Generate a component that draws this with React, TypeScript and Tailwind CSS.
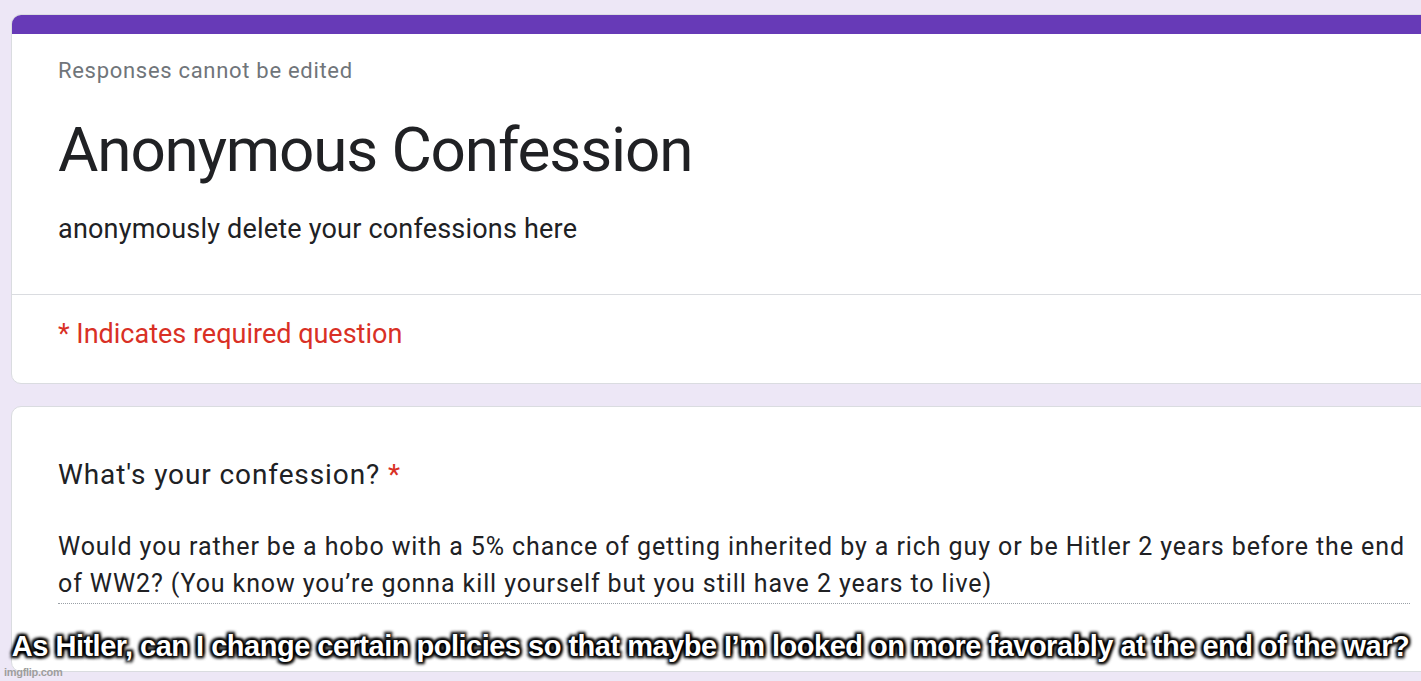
export default function App() {
    return (
        <div
            className="relative h-[681px] w-[1421px] overflow-hidden bg-[#ede7f6]"
            style={{ fontFamily: "Roboto, 'Noto Sans', sans-serif" }}
        >
            <div className="pl-[11px] pt-[14px]">
                {/* header card */}
                <div className="w-[1440px] rounded-[10px] border border-[#dadce0] bg-white overflow-hidden">
                    <div className="h-[19px] bg-[#673ab7]" />
                    <div className="px-[46px]">
                        <div className="mt-[23px] text-[22px] leading-[28px] text-[#70757a] tracking-[0.7px]">
                            Responses cannot be edited
                        </div>
                        <h1 className="mt-[29px] text-[62px] leading-[72px] text-[#202124] tracking-[-1.15px]">
                            Anonymous Confession
                        </h1>
                        <div className="mt-[26px] pb-[48px] text-[27px] leading-[34px] text-[#202124] tracking-[0.2px]">
                            anonymously delete your confessions here
                        </div>
                    </div>
                    <div className="border-t border-[#dadce0] px-[46px] pt-[22px] pb-[32px]">
                        <div className="text-[27px] leading-[34px] text-[#d93025] tracking-[0px]">
                            * Indicates required question
                        </div>
                    </div>
                </div>

                {/* question card */}
                <div className="mt-[22px] h-[266px] w-[1440px] rounded-[10px] border border-[#dadce0] bg-white px-[46px]">
                    <div className="mt-[51px] text-[28px] leading-[34px] text-[#202124] tracking-[0.9px]">
                        What's your confession? <span className="text-[#d93025]">*</span>
                    </div>
                    <div className="mt-[36px] w-[1352px] border-b border-dotted border-[#9aa0a6] pb-[1px] text-[25px] leading-[37px] text-[#202124] tracking-[0.9px]">
                        Would you rather be a hobo with a 5% chance of getting inherited by a rich guy or be Hitler 2 years before the end of WW2? (You know you’re gonna kill yourself but you still have 2 years to live)
                    </div>
                </div>
            </div>

            {/* meme caption */}
            <div
                className="absolute left-0 right-0 top-[627px] text-center text-[29px] font-bold leading-[38px] text-white tracking-[-0.5px]"
                style={{
                    fontFamily: "'Liberation Sans', Arial, sans-serif",
                    textShadow:
                        "0 0 2px #000, 0 0 2px #000, 2px 2px 3px #000, -2px -2px 3px #000, 2px -2px 3px #000, -2px 2px 3px #000, 0 0 5px #000",
                }}
            >
                As Hitler, can I change certain policies so that maybe I’m looked on more favorably at the end of the war?
            </div>
            <div
                className="absolute left-[4px] top-[664px] text-[11px] font-bold text-[#9e9e9e] tracking-[-0.3px]"
                style={{ fontFamily: "'Liberation Sans', Arial, sans-serif" }}
            >
                imgflip.com
            </div>
        </div>
    );
}
